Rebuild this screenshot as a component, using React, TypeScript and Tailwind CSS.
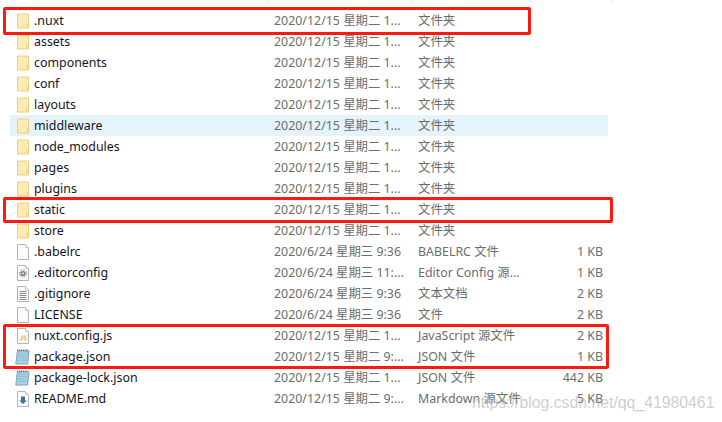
type IconKind = "folder" | "blank" | "gear" | "text" | "js" | "notepad" | "md";

type FileRow = {
    name: string;
    date: string;
    type: string;
    size?: string;
    icon: IconKind;
    active?: boolean;
};

const folderDate = "2020/12/15 星期二 1...";

const rows: FileRow[] = [
    { name: ".nuxt", date: folderDate, type: "文件夹", icon: "folder" },
    { name: "assets", date: folderDate, type: "文件夹", icon: "folder" },
    { name: "components", date: folderDate, type: "文件夹", icon: "folder" },
    { name: "conf", date: folderDate, type: "文件夹", icon: "folder" },
    { name: "layouts", date: folderDate, type: "文件夹", icon: "folder" },
    { name: "middleware", date: folderDate, type: "文件夹", icon: "folder", active: true },
    { name: "node_modules", date: folderDate, type: "文件夹", icon: "folder" },
    { name: "pages", date: folderDate, type: "文件夹", icon: "folder" },
    { name: "plugins", date: folderDate, type: "文件夹", icon: "folder" },
    { name: "static", date: folderDate, type: "文件夹", icon: "folder" },
    { name: "store", date: folderDate, type: "文件夹", icon: "folder" },
    { name: ".babelrc", date: "2020/6/24 星期三 9:36", type: "BABELRC 文件", size: "1 KB", icon: "blank" },
    { name: ".editorconfig", date: "2020/6/24 星期三 11:...", type: "Editor Config 源...", size: "1 KB", icon: "gear" },
    { name: ".gitignore", date: "2020/6/24 星期三 9:36", type: "文本文档", size: "2 KB", icon: "text" },
    { name: "LICENSE", date: "2020/6/24 星期三 9:36", type: "文件", size: "2 KB", icon: "blank" },
    { name: "nuxt.config.js", date: folderDate, type: "JavaScript 源文件", size: "2 KB", icon: "js" },
    { name: "package.json", date: "2020/12/15 星期二 9:...", type: "JSON 文件", size: "1 KB", icon: "notepad" },
    { name: "package-lock.json", date: folderDate, type: "JSON 文件", size: "442 KB", icon: "notepad" },
    { name: "README.md", date: "2020/12/15 星期二 9:...", type: "Markdown 源文件", size: "5 KB", icon: "md" },
];

function Sheet({ children }: { children?: React.ReactNode }) {
    return (
        <svg width="14" height="16" viewBox="0 0 14 16" fill="none">
            <path d="M1.5 0.5H9.5L12.5 3.5V15.5H1.5Z" fill="#fcfcfc" stroke="#b4b4b4" />
            <path d="M9.5 0.5V3.5H12.5" fill="#efefef" stroke="#c8c8c8" />
            {children}
        </svg>
    );
}

function FileIcon({ kind }: { kind: IconKind }) {
    if (kind === "folder") {
        return (
            <svg width="14" height="16" viewBox="0 0 14 16" fill="none">
                <path d="M1.5 1H12.5V15H1.5Z" fill="#fdeaae" stroke="#ecd07c" />
                <path d="M2 2H12V14H2Z" fill="#fdebb6" />
                <path d="M10 14.5V10.5L12 9.5V14.5Z" fill="#f8dc8c" />
            </svg>
        );
    }
    if (kind === "gear") {
        return (
            <Sheet>
                <circle cx="7" cy="8.5" r="2.6" fill="#6f7f8c" />
                <circle cx="7" cy="8.5" r="3.6" stroke="#6f7f8c" strokeDasharray="1.4 1.4" />
                <circle cx="7" cy="8.5" r="1" fill="#fff" />
            </Sheet>
        );
    }
    if (kind === "text") {
        return (
            <Sheet>
                <path d="M3.5 5.5H10.5M3.5 7.5H10.5M3.5 9.5H10.5M3.5 11.5H10.5M3.5 13.5H10.5" stroke="#8a8a8a" />
            </Sheet>
        );
    }
    if (kind === "js") {
        return (
            <Sheet>
                <path d="M3 7H11V13H3Z" fill="#f8f5d8" />
                <path d="M6 8V11.2C6 12.2 4.6 12.2 4.2 11.5M10.2 8.6C9.4 7.8 7.8 8.1 8 9.2C8.2 10.2 10.2 9.9 10.2 11C10.2 12.1 8.4 12.1 7.7 11.4" stroke="#c4b85a" strokeWidth="0.9" />
            </Sheet>
        );
    }
    if (kind === "notepad") {
        return (
            <svg width="16" height="16" viewBox="0 0 16 16" fill="none" className="-ml-px">
                <path d="M2.5 1.5H15L13.5 15.5H0.8Z" fill="#a9d3e4" stroke="#7f9fb0" />
                <path d="M3 4H14M2.8 6.5H13.8M2.5 9H13.5M2.2 11.5H13.2" stroke="#7fb6cf" strokeWidth="0.8" />
                <path d="M3 1.5V0M5 1.5V0M7 1.5V0M9 1.5V0M11 1.5V0M13 1.5V0" stroke="#555" />
            </svg>
        );
    }
    if (kind === "md") {
        return (
            <Sheet>
                <path d="M5 5.5H9V9.5H10.8L7 13L3.2 9.5H5Z" fill="#3f6f96" />
            </Sheet>
        );
    }
    return <Sheet />;
}

function Row({ row }: { row: FileRow }) {
    return (
        <div className={`flex h-[21px] w-[598px] items-center ${row.active ? "bg-[#e5f3fb]" : ""}`}>
            <div className="flex w-[264px] items-center pl-[6px]">
                <div className="flex w-[14px] justify-center">
                    <FileIcon kind={row.icon} />
                </div>
                <span className="ml-[4px] pt-[2px] text-[#14141f]">{row.name}</span>
            </div>
            <span className="w-[144px] whitespace-nowrap pt-[2px] text-[#6d6d6d]">{row.date}</span>
            <span className="w-[120px] whitespace-nowrap pt-[2px] text-[#6d6d6d]">{row.type}</span>
            <span className="w-[65px] pt-[2px] text-right text-[#6d6d6d]">{row.size}</span>
        </div>
    );
}

export default function App() {
    return (
        <main className="relative h-[422px] w-[722px] overflow-hidden bg-white font-['Noto_Sans','Noto_Sans_CJK_SC',sans-serif] text-[12.4px] leading-none">
            {/* column separators left of the header cut off */}
            <div className="flex h-[10px] pl-[267px]">
                <div className="h-[3px] w-[144px] border-l border-[#e5e5e5]"></div>
                <div className="h-[3px] w-[120px] border-l border-[#e5e5e5]"></div>
                <div className="h-[3px] w-[80px] border-l border-[#e5e5e5]"></div>
                <div className="h-[3px] border-l border-[#e5e5e5]"></div>
            </div>
            <div className="pl-[10px]">
                {rows.map((row) => (
                    <Row key={row.name} row={row} />
                ))}
            </div>

            {/* red annotation boxes */}
            <div className="absolute left-[3px] top-[7px] h-[28px] w-[528px] rounded-[2px] border-[3px] border-[#fb1a10]"></div>
            <div className="absolute left-[3px] top-[197px] h-[26px] w-[610px] rounded-[2px] border-[3px] border-[#fb1a10]"></div>
            <div className="absolute left-[3px] top-[324px] h-[45px] w-[606px] rounded-[2px] border-[3px] border-[#fb1a10]"></div>

            <span className="absolute left-[472px] top-[395px] font-['Liberation_Sans',sans-serif] text-[15.8px] text-[#b8b8b8]/70">
                https://blog.csdn.net/qq_41980461
            </span>
        </main>
    );
}
